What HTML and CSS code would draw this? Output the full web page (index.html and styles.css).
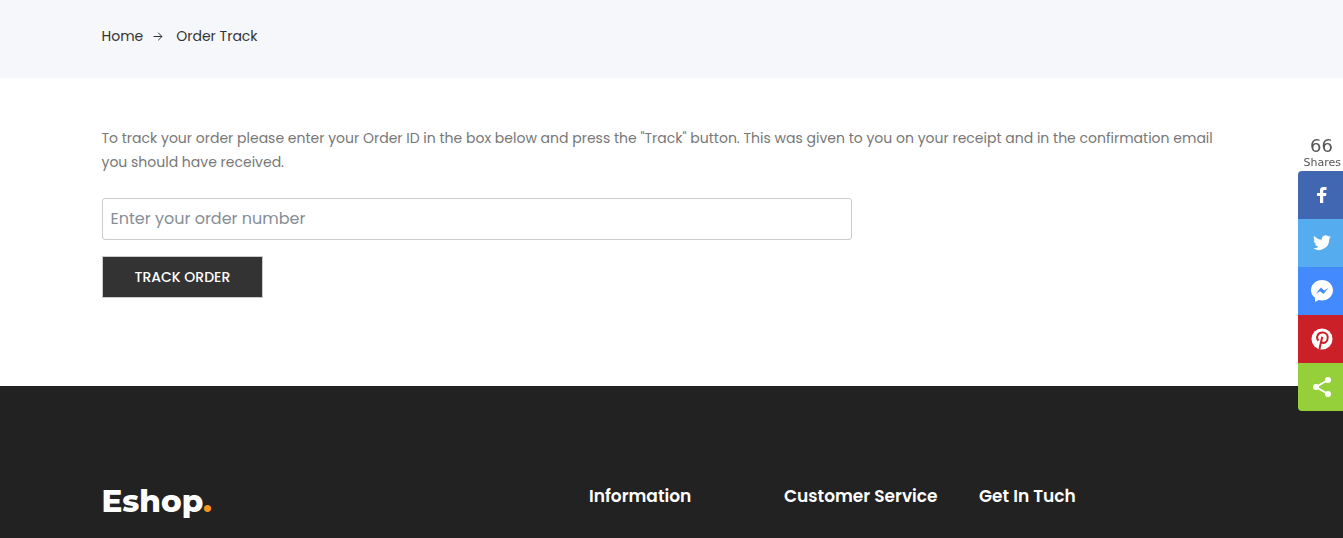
FILE: index.html
```html
<!DOCTYPE html>
<html lang="en">
<head>
<meta charset="utf-8">
<meta name="viewport" content="width=device-width, initial-scale=1">
<title>Order Track - Eshop</title>
<link rel="stylesheet" href="styles.css">
</head>
<body>
<nav class="breadcrumbs" aria-label="Breadcrumb">
  <div class="container trail">
    <a href="#">Home</a>
    <svg class="arrow" viewBox="0 0 10 10" aria-hidden="true"><path d="M0.5 5.500H9M5.200 1.700L9 5.500L5.200 9.300"/></svg>
    <a href="#">Order Track</a>
  </div>
</nav>
<main class="container track">
  <p class="intro">To track your order please enter your Order ID in the box below and press the "Track" button. This was given to you on your receipt and in the confirmation email you should have received.</p>
  <form class="track-form">
    <input class="order-input" type="text" aria-label="Order number" placeholder="Enter your order number">
    <button class="track-button" type="submit">TRACK ORDER</button>
  </form>
</main>
<footer class="footer">
  <div class="container footer-grid">
    <a class="logo" href="#">Eshop<span class="logo-dot">.</span></a>
    <h4 class="footer-title">Information</h4>
    <h4 class="footer-title">Customer Service</h4>
    <h4 class="footer-title">Get In Tuch</h4>
  </div>
</footer>
<aside class="share">
  <div class="share-total"><span class="share-count">66</span><span class="share-label">Shares</span></div>
  <div class="share-list">
    <button class="share-button facebook" type="button" aria-label="Facebook"><svg viewBox="0 0 24 24"><path d="M10 20v-7H7v-3H10V7.500C10 5 11.300 4 13.600 4H16.500v3H14.600C13.600 7 13.200 7.400 13.200 8.300V10h3.200l-.4 3h-2.800v7z"/></svg></button>
    <button class="share-button twitter" type="button" aria-label="Twitter"><svg viewBox="0 0 24 24"><path d="M21 5.900c-.7.300-1.400.5-2.100.6.800-.5 1.300-1.200 1.600-2-.7.400-1.500.7-2.300.9A3.700 3.700 0 0 0 11.900 8.700 10.400 10.400 0 0 1 4.300 4.900a3.700 3.700 0 0 0 1.100 4.900c-.6 0-1.200-.2-1.700-.5 0 1.800 1.200 3.300 3 3.700-.5.100-1.100.2-1.700.1.500 1.500 1.800 2.500 3.500 2.600A7.400 7.400 0 0 1 3 17.300 10.500 10.500 0 0 0 19.200 7.900c.7-.5 1.300-1.200 1.800-2z"/></svg></button>
    <button class="share-button messenger" type="button" aria-label="Messenger"><svg viewBox="0 0 24 24"><path fill-rule="evenodd" d="M12 1C5.900 1 1 5.600 1 11.300c0 3.200 1.500 5.600 4 7.400V23l3.700-2c1 .3 2.200.5 3.300.5 6.100 0 11-4.600 11-10.200S18.100 1 12 1zM5.800 14.800L10.900 8.600l3.200 2.800L18.500 8.800l-5.100 6.100-3.300-2.700z"/></svg></button>
    <button class="share-button pinterest" type="button" aria-label="Pinterest"><svg viewBox="0 0 24 24"><circle cx="12" cy="12" r="10.500"/><path class="pin" d="M9.600 22C9.800 19 11.300 14.500 12.200 9.800M8.400 13.600C5.500 10.300 7.800 5.600 12.500 5.600c3.300 0 5.200 2.100 5.200 4.700 0 3.200-1.900 5.600-4.200 5.600-1.200 0-2-.7-2.200-1.500"/></svg></button>
    <button class="share-button more" type="button" aria-label="More sharing options"><svg viewBox="0 0 24 24"><path class="links" d="M18 5L6 12l12 7"/><circle cx="18" cy="5" r="3"/><circle cx="6" cy="12" r="3"/><circle cx="18" cy="19" r="3"/></svg></button>
  </div>
</aside>
</body>
</html>
```
FILE: styles.css
```css
* {
  box-sizing: border-box;
}

body {
  margin: 0;
  background: #fff;
  color: #777;
  font: 14px/24px Poppins, Inter, sans-serif;
}

a {
  color: #333;
  text-decoration: none;
}

.container {
  width: 100%;
  max-width: 1170px;
  margin: 0 auto;
  padding: 0 15px;
}

.breadcrumbs {
  padding: 24px 0 30px;
  background: #f6f7fb;
}

.trail {
  display: flex;
  align-items: center;
}

.arrow {
  width: 10px;
  height: 10px;
  margin: 0 13px 0 10px;
  fill: none;
  stroke: #333;
}

.track {
  padding-top: 48px;
  padding-bottom: 88px;
}

.intro {
  margin: 0 0 24px;
}

.track-form {
  display: flex;
  flex-direction: column;
  align-items: flex-start;
  gap: 16px;
  max-width: 750px;
}

.order-input {
  width: 100%;
  height: 42px;
  padding: 0 8px 2px;
  border: 1px solid #ccc;
  border-radius: 3px;
  font: 16px/24px Poppins, Inter, sans-serif;
}

.order-input::placeholder {
  color: #868e96;
  opacity: 1;
}

.track-button {
  height: 42px;
  padding: 0 32px;
  border: 1px solid #ccc;
  background: #333;
  color: #fff;
  font: 500 14px/24px Poppins, Inter, sans-serif;
}

.footer {
  min-height: 152px;
  padding: 96px 0 20px;
  background: #222;
}

.footer-grid {
  display: grid;
  grid-template-columns: repeat(12, minmax(0, 1fr));
  column-gap: 30px;
}

.logo {
  grid-column: span 5;
  color: #fff;
  font: 800 31px/38px Montserrat, Poppins, sans-serif;
}

.logo-dot {
  color: #f7941d;
}

.footer-title {
  grid-column: span 2;
  margin: 0;
  color: #fff;
  font-size: 17px;
  font-weight: 600;
  line-height: 28px;
  white-space: nowrap;
}

.footer-title:last-child {
  grid-column: span 3;
}

.share {
  position: fixed;
  top: 137px;
  right: 0;
  width: 45px;
}

.share-total {
  display: flex;
  flex-direction: column;
  align-items: flex-end;
  padding: 0 2px 0 0;
  color: #555;
  font-family: "DejaVu Sans", sans-serif;
}

.share-count {
  padding-right: 8px;
  font-size: 18px;
  line-height: 18px;
}

.share-label {
  font-size: 11px;
  line-height: 16px;
}

.share-list {
  overflow: hidden;
  border-radius: 4px 0 0 4px;
}

.share-button {
  display: flex;
  align-items: center;
  justify-content: center;
  width: 100%;
  height: 48px;
  padding: 0 0 0 3px;
  border: 0;
}

.share-button svg {
  width: 24px;
  height: 24px;
  fill: #fff;
}

.facebook {
  background: #4267b2;
}

.twitter {
  background: #55acee;
}

.messenger {
  background: #448aff;
}

.pinterest {
  background: #cb2027;
}

.more {
  background: #95d03a;
}

.share-button .pin {
  fill: none;
  stroke: #cb2027;
  stroke-width: 2;
}

.share-button .links {
  fill: none;
  stroke: #fff;
  stroke-width: 2;
}
```
